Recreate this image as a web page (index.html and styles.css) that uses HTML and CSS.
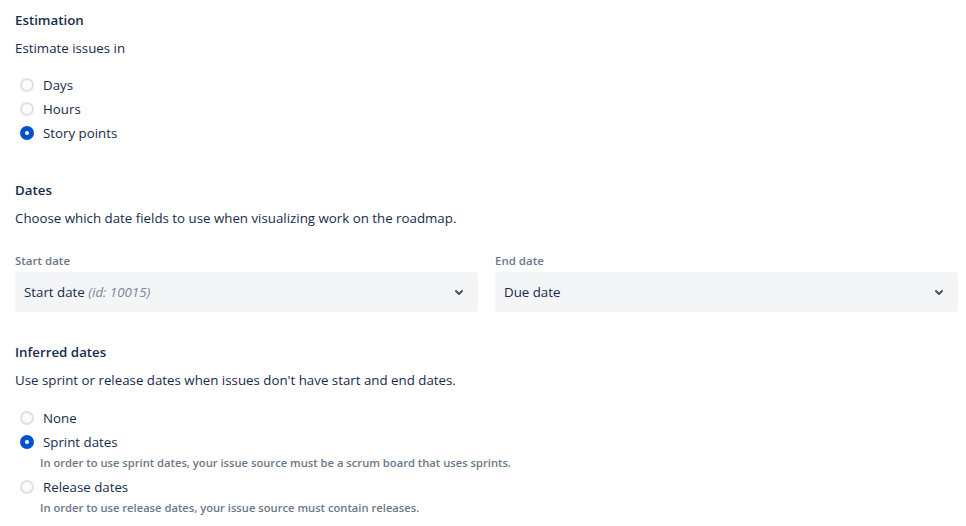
FILE: index.html
```html
<!DOCTYPE html>
<html>
<head>
<meta charset="utf-8">
<link rel="stylesheet" href="styles.css">
</head>
<body>
<div class="page">
  <section class="section">
    <h3 class="heading">Estimation</h3>
    <p class="desc">Estimate issues in</p>
    <div class="radios first">
      <label class="radio"><span class="dot"></span><span class="label">Days</span></label>
      <label class="radio"><span class="dot"></span><span class="label">Hours</span></label>
      <label class="radio"><span class="dot checked"></span><span class="label">Story points</span></label>
    </div>
  </section>
  <section class="section">
    <h3 class="heading">Dates</h3>
    <p class="desc">Choose which date fields to use when visualizing work on the roadmap.</p>
    <div class="fields">
      <div class="field">
        <div class="field-label">Start date</div>
        <div class="select"><span>Start date <em class="muted">(id: 10015)</em></span>
          <svg class="chev" width="24" height="24" viewBox="0 0 24 24"><path d="M8.292 10.293a1.009 1.009 0 0 0 0 1.419l2.939 2.965c.218.215.5.322.779.322s.556-.107.769-.322l2.93-2.955a1.01 1.01 0 0 0 0-1.419.987.987 0 0 0-1.406 0l-2.298 2.317-2.307-2.327a.99.99 0 0 0-1.406 0z" fill="#42526e"/></svg>
        </div>
      </div>
      <div class="field">
        <div class="field-label">End date</div>
        <div class="select"><span>Due date</span>
          <svg class="chev" width="24" height="24" viewBox="0 0 24 24"><path d="M8.292 10.293a1.009 1.009 0 0 0 0 1.419l2.939 2.965c.218.215.5.322.779.322s.556-.107.769-.322l2.93-2.955a1.01 1.01 0 0 0 0-1.419.987.987 0 0 0-1.406 0l-2.298 2.317-2.307-2.327a.99.99 0 0 0-1.406 0z" fill="#42526e"/></svg>
        </div>
      </div>
    </div>
  </section>
  <section class="section">
    <h3 class="heading">Inferred dates</h3>
    <p class="desc">Use sprint or release dates when issues don't have start and end dates.</p>
    <div class="radios second">
      <label class="radio"><span class="dot"></span><span class="label">None</span></label>
      <label class="radio"><span class="dot checked"></span><span class="label">Sprint dates</span></label>
      <div class="help">In order to use sprint dates, your issue source must be a scrum board that uses sprints.</div>
      <label class="radio"><span class="dot"></span><span class="label">Release dates</span></label>
      <div class="help">In order to use release dates, your issue source must contain releases.</div>
    </div>
  </section>
</div>
</body>
</html>
```
FILE: styles.css
```css
* { box-sizing: border-box; }
body {
  margin: 0;
  font-family: "Open Sans", "Noto Sans", sans-serif;
  color: #172b4d;
  background: #fff;
  font-size: 13.3px;
}
.page {
  padding: 10px 8px 0 15px;
  display: flex;
  flex-direction: column;
  gap: 30px;
}
.heading {
  margin: 0;
  font-size: 13.3px;
  font-weight: 600;
  line-height: 20px;
}
.desc {
  margin: 8px 0 0;
  line-height: 20px;
}
.radios {
  margin-top: 15px;
  display: flex;
  flex-direction: column;
}
.radios.first { padding-bottom: 5px; }
.radios.second { margin-top: 16px; }
.radio {
  display: flex;
  align-items: center;
  height: 24px;
  padding-left: 5px;
}
.label { line-height: 24px; }
.dot {
  width: 14px;
  height: 14px;
  border-radius: 50%;
  border: 2px solid #dfe1e6;
  background: #fafbfc;
  margin-right: 9px;
  position: relative;
  flex: none;
}
.dot.checked {
  background: #0052cc;
  border-color: #0052cc;
}
.dot.checked::after {
  content: "";
  position: absolute;
  left: 3px;
  top: 3px;
  width: 4px;
  height: 4px;
  border-radius: 50%;
  background: #fff;
}
.help {
  font-size: 11.2px;
  font-weight: 600;
  color: #6b778c;
  padding-left: 25px;
  line-height: 16px;
  margin-top: 1px;
  margin-bottom: 4px;
}
.fields {
  margin-top: 25px;
  display: flex;
  gap: 17px;
}
.field { flex: 1; }
.field-label {
  font-size: 11.5px;
  font-weight: 600;
  color: #6b778c;
  line-height: 16px;
  margin-bottom: 3px;
}
.select {
  height: 40px;
  background: #f4f5f7;
  border-radius: 3px;
  display: flex;
  align-items: center;
  justify-content: space-between;
  padding: 0 7px 0 9px;
}
.muted { color: #7a869a; }
.chev { display: block; }
```
